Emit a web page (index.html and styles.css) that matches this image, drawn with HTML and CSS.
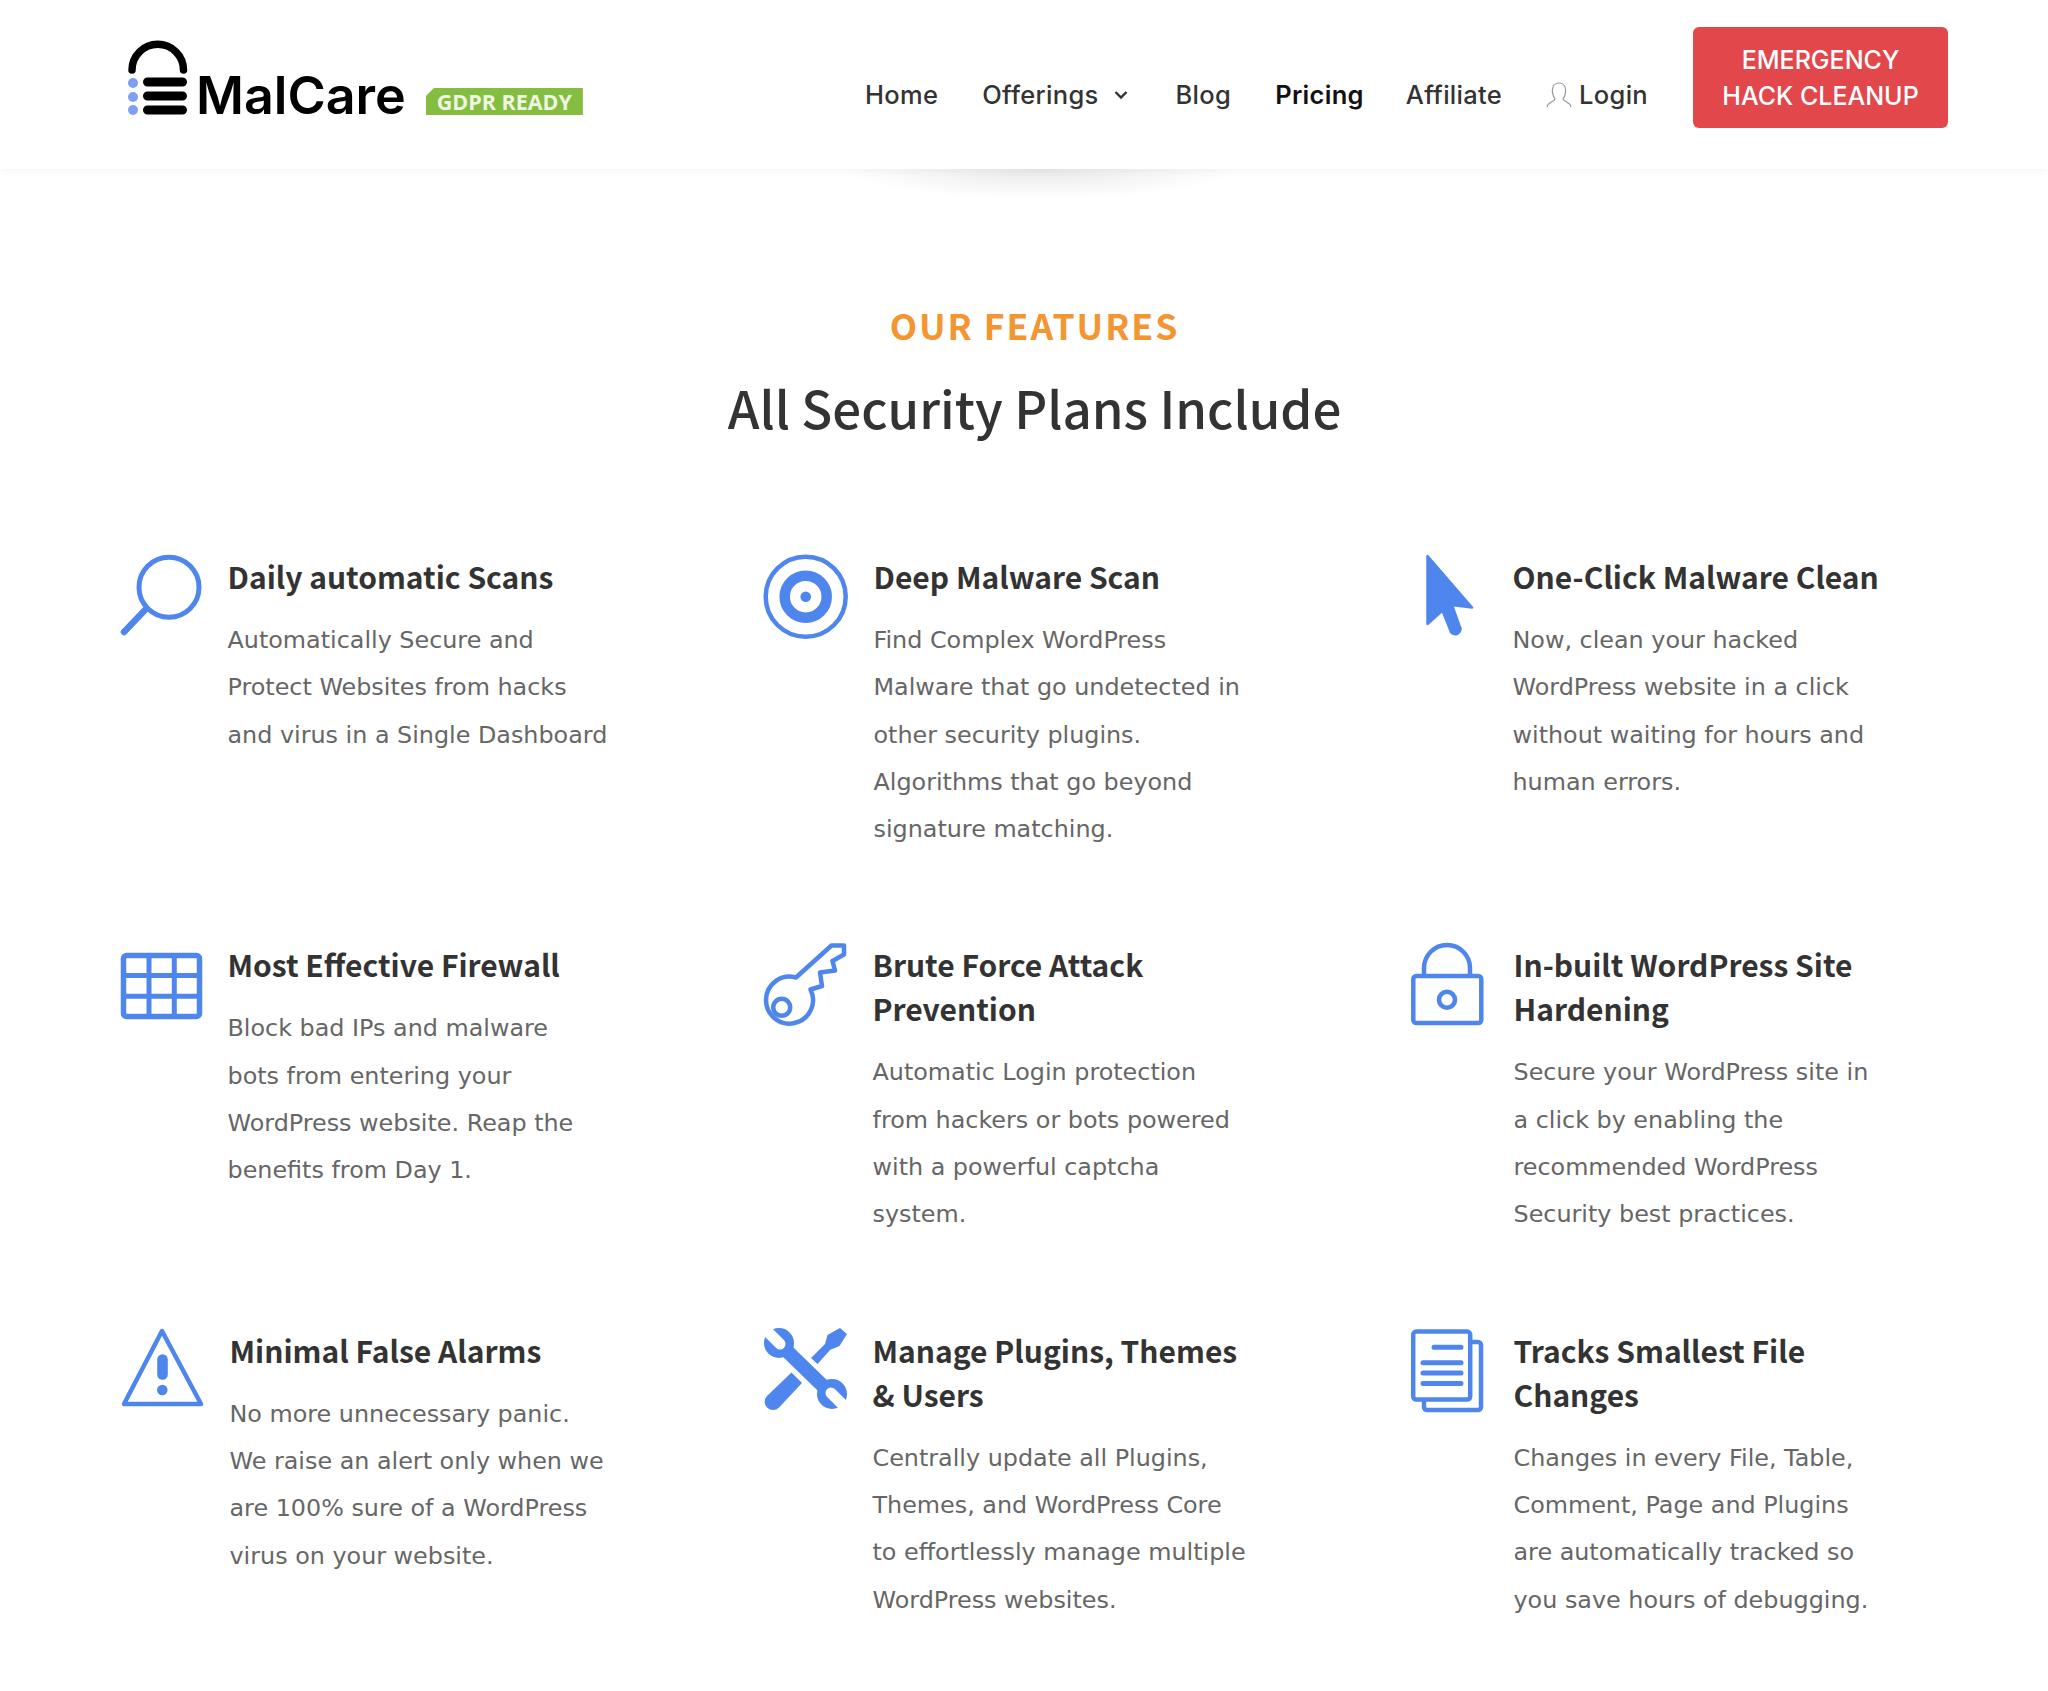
FILE: index.html
```html
<!DOCTYPE html>
<html>
<head>
  <meta charset="utf-8">
  <title>MalCare - Features</title>
  <link rel="stylesheet" href="styles.css">
</head>
<body>
  <header class="site-header">
    <a class="logo" href="#">
      <svg class="logo-mark" viewBox="0 0 62 76" width="62" height="76">
        <path d="M6 30 A25.700 25.700 0 0 1 57.500 30" fill="none" stroke="#000" stroke-width="7.500" stroke-linecap="round"/>
        <path d="M21.500 42 H56.500 M21.500 56 H56.500 M21.500 70 H56.500" stroke="#000" stroke-width="9" stroke-linecap="round"/>
        <circle cx="7" cy="43" r="5" fill="#7f9ff5"/>
        <circle cx="7" cy="57" r="5" fill="#7f9ff5"/>
        <circle cx="7" cy="70" r="5" fill="#7f9ff5"/>
      </svg>
      <span class="logo-name">MalCare</span>
      <span class="gdpr">GDPR READY</span>
    </a>
    <nav class="main-nav">
      <a href="#">Home</a>
      <a href="#" class="has-sub">Offerings
        <svg viewBox="0 0 14 10" width="14" height="10"><path d="M1.500 2 L7 7.500 L12.500 2" fill="none" stroke="#333" stroke-width="2.400"/></svg>
      </a>
      <a href="#">Blog</a>
      <a href="#" class="current">Pricing</a>
      <a href="#">Affiliate</a>
      <a href="#" class="login">
        <svg viewBox="0 0 26 26" width="26" height="26"><path d="M1 25 C2 20 8 20 9 17 C7 14 6 11 6.500 7 C7 3 10 1 13 1 C16 1 19 3 19.500 7 C20 11 19 14 17 17 C18 20 24 20 25 25" fill="none" stroke="#999" stroke-width="1.200"/></svg>
        Login
      </a>
    </nav>
    <a class="hack-btn" href="#">EMERGENCY<br>HACK CLEANUP</a>
  </header>

  <main class="features">
    <div class="section-title">
      <h4>OUR FEATURES</h4>
      <h2>All Security Plans Include</h2>
    </div>

    <div class="feature-grid">
      <div class="feature">
        <svg class="icon" viewBox="21 14 82 84" width="82" height="84">
          <circle cx="69" cy="47.300" r="30" fill="none" stroke-width="5"/>
          <path d="M45 70 L24 92" fill="none" stroke-width="6.500" stroke-linecap="round"/>
        </svg>
        <div class="feature-text">
          <h3>Daily automatic Scans</h3>
          <p>Automatically Secure and<br>Protect Websites from hacks<br>and virus in a Single Dashboard</p>
        </div>
      </div>

      <div class="feature">
        <svg class="icon" viewBox="13 14 86 84" width="86" height="84">
          <circle cx="55.700" cy="56.700" r="40" fill="none" stroke-width="4.500"/>
          <circle cx="55.700" cy="56.700" r="21" fill="none" stroke-width="10.500"/>
          <circle class="solid" cx="55.700" cy="56.700" r="5.300"/>
        </svg>
        <div class="feature-text">
          <h3>Deep Malware Scan</h3>
          <p>Find Complex WordPress<br>Malware that go undetected in<br>other security plugins.<br>Algorithms that go beyond<br>signature matching.</p>
        </div>
      </div>

      <div class="feature">
        <svg class="icon" viewBox="10 14 78 84" width="78" height="84">
          <path class="solid" stroke-width="2.500" stroke-linejoin="round" d="M27.500 16 L72 67.500 L52 65 L59.500 86 A4.800 4.800 0 0 1 51 92 L42.500 70.500 L27.500 84 Z"/>
        </svg>
        <div class="feature-text">
          <h3>One-Click Malware Clean</h3>
          <p>Now, clean your hacked<br>WordPress website in a click<br>without waiting for hours and<br>human errors.</p>
        </div>
      </div>

      <div class="feature">
        <svg class="icon" viewBox="21 12.500 82 84" width="82" height="84">
          <rect x="23.500" y="26" width="76" height="61" rx="3" fill="none" stroke-width="5.500"/>
          <path d="M49 26 V87 M74.300 26 V87 M23.500 46 H99.500 M23.500 66.700 H99.500" fill="none" stroke-width="5"/>
        </svg>
        <div class="feature-text">
          <h3>Most Effective Firewall</h3>
          <p>Block bad IPs and malware<br>bots from entering your<br>WordPress website. Reap the<br>benefits from Day 1.</p>
        </div>
      </div>

      <div class="feature">
        <svg class="icon" viewBox="13 13 85 84" width="85" height="84">
          <path d="M81.500 16.500 H94 V25.500 L82.500 32 L85 41.500 L70 43.500 L72 57 L60.500 60.500 A23.500 23.500 0 1 1 46 48.500 Z" fill="none" stroke-width="4.500" stroke-linejoin="round"/>
          <circle cx="31.700" cy="78.300" r="8.500" fill="none" stroke-width="4.500"/>
        </svg>
        <div class="feature-text">
          <h3>Brute Force Attack<br>Prevention</h3>
          <p>Automatic Login protection<br>from hackers or bots powered<br>with a powerful captcha<br>system.</p>
        </div>
      </div>

      <div class="feature">
        <svg class="icon" viewBox="10 13 79 84" width="79" height="84">
          <rect x="13.300" y="47" width="68" height="47" rx="3" fill="none" stroke-width="4.500"/>
          <path d="M24 46 V39 a23 23 0 0 1 46 0 V46" fill="none" stroke-width="4.500"/>
          <circle cx="47" cy="70.700" r="8" fill="none" stroke-width="4.600"/>
        </svg>
        <div class="feature-text">
          <h3>In-built WordPress Site<br>Hardening</h3>
          <p>Secure your WordPress site in<br>a click by enabling the<br>recommended WordPress<br>Security best practices.</p>
        </div>
      </div>

      <div class="feature">
        <svg class="icon" viewBox="21 14 84 84" width="84" height="84">
          <path d="M62 17 L24 90 H101 Z" fill="none" stroke-width="4.500" stroke-linejoin="round"/>
          <path d="M62.500 45.500 V60.500" fill="none" stroke-width="10.600" stroke-linecap="round"/>
          <circle class="solid" cx="62.300" cy="76" r="5.300"/>
        </svg>
        <div class="feature-text">
          <h3>Minimal False Alarms</h3>
          <p>No more unnecessary panic.<br>We raise an alert only when we<br>are 100% sure of a WordPress<br>virus on your website.</p>
        </div>
      </div>

      <div class="feature">
        <svg class="icon" viewBox="13 14 85 84" width="85" height="84">
          <path d="M38 38 L75 74" fill="none" stroke-width="14"/>
          <circle class="solid" cx="29" cy="29" r="15"/>
          <circle class="solid" cx="82" cy="80" r="15"/>
          <path class="cut" d="M30 30 L16 16 M81 79 L95 93" fill="none" stroke-width="11" stroke-linecap="round"/>
          <path class="solid" d="M41.500 58.500 L52 69 L29 93.500 A8 8 0 0 1 17 82 Z"/>
          <path class="solid" d="M61 44 L75 30 L77.500 21 L90 14 L97 20 L89.500 32 L80 36 L67.500 50 Z"/>
        </svg>
        <div class="feature-text">
          <h3>Manage Plugins, Themes<br>&amp; Users</h3>
          <p>Centrally update all Plugins,<br>Themes, and WordPress Core<br>to effortlessly manage multiple<br>WordPress websites.</p>
        </div>
      </div>

      <div class="feature">
        <svg class="icon" viewBox="10 13 79 84" width="79" height="84">
          <rect x="13.200" y="16.600" width="57" height="68" rx="3" fill="none" stroke-width="4.500"/>
          <path d="M72 27 H78 a3 3 0 0 1 3 3 V92 a3 3 0 0 1 -3 3 H27 a3 3 0 0 1 -3 -3 V86" fill="none" stroke-width="4.500"/>
          <path d="M34 32.300 H61 M23 47.700 H61 M23 58 H61 M23 68.500 H61" fill="none" stroke-width="5" stroke-linecap="round"/>
        </svg>
        <div class="feature-text">
          <h3>Tracks Smallest File<br>Changes</h3>
          <p>Changes in every File, Table,<br>Comment, Page and Plugins<br>are automatically tracked so<br>you save hours of debugging.</p>
        </div>
      </div>
    </div>
  </main>
</body>
</html>
```

FILE: styles.css
```css
body {
  margin: 0;
  padding: 0;
  background: #fff;
  font-family: 'DejaVu Sans', Verdana, sans-serif;
  color: #666;
}

a {
  text-decoration: none;
  color: inherit;
}

/* header */
.site-header {
  position: relative;
  height: 169px;
  display: flex;
  align-items: center;
  padding-left: 126px;
  padding-right: 100px;
  background: #fff;
  box-shadow: 0 1px 8px rgba(0, 0, 0, 0.06);
}

.site-header:after {
  content: "";
  position: absolute;
  left: 840px;
  top: 169px;
  width: 400px;
  height: 30px;
  background: radial-gradient(ellipse at 50% 0, rgba(0, 0, 0, 0.09) 0%, rgba(0, 0, 0, 0) 70%);
}

.logo {
  display: flex;
  align-items: flex-end;
  height: 76px;
  margin-top: -13px;
}

.logo-name {
  margin-left: 8px;
  margin-bottom: -4px;
  font-family: Inter, sans-serif;
  font-size: 52px;
  font-weight: 600;
  line-height: 48px;
  color: #000;
}

.gdpr {
  margin-left: 20px;
  margin-bottom: 1px;
  width: 157px;
  height: 27px;
  line-height: 27px;
  text-align: center;
  font-family: 'Open Sans', sans-serif;
  font-size: 21.500px;
  font-weight: 700;
  color: #eef6e2;
  background: #85bd41;
  clip-path: polygon(8px 0, 100% 0, 100% 100%, 0 100%, 0 8px);
}

.main-nav {
  margin-left: auto;
  margin-top: 20px;
  display: flex;
  align-items: center;
  gap: 44px;
  font-family: Inter, sans-serif;
  font-size: 25.500px;
  letter-spacing: 0.3px;
  font-weight: 500;
  color: #333;
}

.main-nav a {
  display: flex;
  align-items: center;
}

.main-nav .has-sub svg {
  margin-left: 15px;
  margin-right: 4px;
}

.main-nav .current {
  color: #111;
  font-weight: 600;
  margin-right: -2px;
}

.main-nav .login svg {
  margin-right: 7px;
}

.hack-btn {
  margin-left: 45px;
  margin-top: -14px;
  width: 255px;
  height: 101px;
  box-sizing: border-box;
  padding-top: 15px;
  border-radius: 6px;
  background: #e2474b;
  color: #fff;
  text-align: center;
  font-family: Inter, sans-serif;
  font-size: 25px;
  font-weight: 500;
  line-height: 36px;
}

/* features */
.features {
  padding: 0 100px 0 121px;
}

.section-title {
  padding-top: 133px;
  text-align: center;
}

.section-title h4 {
  margin: 0;
  font-family: 'Noto Sans CJK SC', sans-serif;
  font-size: 35.500px;
  font-weight: 700;
  line-height: 46px;
  letter-spacing: 2px;
  color: #f39530;
}

.section-title h2 {
  margin: 26px 0 0;
  font-family: 'Noto Sans CJK SC', sans-serif;
  font-size: 51px;
  font-weight: 500;
  line-height: 66px;
  color: #333;
}

.feature-grid {
  display: grid;
  grid-template-columns: 642px 647px 1fr;
  row-gap: 89px;
  margin-top: 114px;
}

.feature {
  display: flex;
  align-items: flex-start;
  gap: 24.500px;
}

.icon {
  flex-shrink: 0;
  overflow: visible;
  stroke: #4f86ed;
}

.icon .solid {
  fill: #4f86ed;
  stroke: none;
}

.icon .solid[stroke-width] {
  stroke: #4f86ed;
}

.icon .cut {
  stroke: #fff;
}

.feature-text h3 {
  margin: 0 0 19px;
  font-family: 'Noto Sans CJK SC', sans-serif;
  font-size: 30px;
  font-weight: 700;
  line-height: 44px;
  color: #333;
}

.feature-text p {
  margin: 0;
  font-size: 23.850px;
  line-height: 47.300px;
  color: #666;
}
```
